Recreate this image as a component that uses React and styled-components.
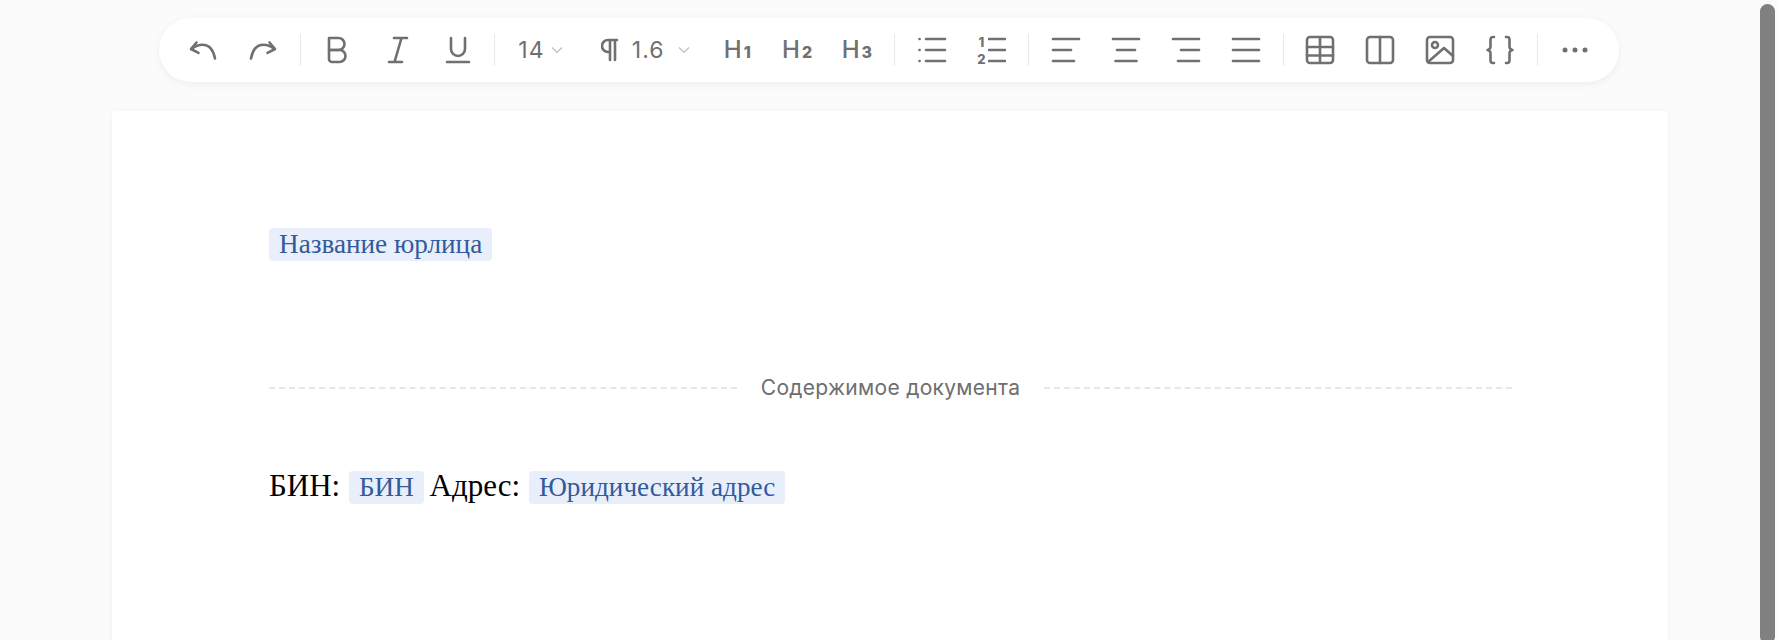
import React from "react";
import styled, { createGlobalStyle } from "styled-components";

const GlobalStyle = createGlobalStyle`
  html, body {
    margin: 0;
    padding: 0;
    background: #fbfbfb;
  }
`;

const Screen = styled.div`
  position: relative;
  width: 1778px;
  height: 640px;
  overflow: hidden;
  background: #fbfbfb;
  font-family: Inter, "Noto Sans", sans-serif;
`;

const ToolbarRow = styled.div`
  display: flex;
  justify-content: center;
  padding-top: 18px;
`;

const Toolbar = styled.div`
  display: flex;
  align-items: center;
  height: 64px;
  padding: 0 14px;
  background: #fff;
  border-radius: 32px;
  box-shadow: 0 2px 8px rgba(0, 0, 0, 0.06);
`;

const Btn = styled.div`
  display: flex;
  align-items: center;
  justify-content: center;
  width: 59.8px;
  height: 40px;
  color: #707070;
`;

const Divider = styled.div`
  width: 1px;
  height: 32px;
  margin: 0 7px;
  background: #e9e9e9;
`;

const Select = styled.div`
  box-sizing: border-box;
  display: flex;
  align-items: center;
  justify-content: center;
  gap: ${(p) => p.$gap}px;
  width: ${(p) => p.$width}px;
  height: 40px;
  padding-left: ${(p) => p.$shift || 0}px;
  color: #707070;
  font-size: 23px;
  letter-spacing: 1px;
`;

const Icon = styled.svg`
  width: 30px;
  height: 30px;
  fill: none;
  stroke: currentColor;
  stroke-width: 2.6;
  stroke-linecap: round;
  stroke-linejoin: round;
`;

const NarrowIcon = styled(Icon)`
  width: 18px;
`;

const Chevron = styled.svg`
  width: 12px;
  height: 8px;
  fill: none;
  stroke: #bdbdbd;
  stroke-width: 1.2;
`;

const Heading = styled.span`
  display: inline-flex;
  align-items: baseline;
  font-size: 24px;
  line-height: 1;
  font-weight: 500;
`;

const HeadingNum = styled.span`
  font-size: 16px;
  font-weight: 800;
  margin-left: 2px;
`;

const OlNums = styled.div`
  display: flex;
  flex-direction: column;
  gap: 5px;
  width: 10px;
  margin-right: 2px;
  font-size: 13px;
  font-weight: 800;
  line-height: 12px;
  text-align: center;
`;

const Card = styled.div`
  margin: 29px 110px 0 112px;
  height: 560px;
  padding: 114px 156px 0 157px;
  background: #fff;
  border-radius: 4px;
  box-shadow: 0 0 6px rgba(0, 0, 0, 0.04);
  font-family: "Liberation Serif", serif;
  font-size: 31px;
  color: #000;
`;

const Line = styled.div`
  line-height: 35px;
`;

const Field = styled.span`
  display: inline-block;
  margin: ${(p) => (p.$inline ? "0 -2px 0 1px" : "0")};
  padding: 0 10px;
  font-size: 27.2px;
  line-height: 33px;
  color: #335a9c;
  background: #e8effa;
  border-radius: 4px;
`;

const Separator = styled.div`
  display: flex;
  align-items: center;
  gap: 24px;
  margin: 114px 0 68px;
  font-family: Inter, "Noto Sans", sans-serif;
  font-size: 21px;
  letter-spacing: 0.3px;
  color: #6e6e6e;
`;

const Dash = styled.div`
  flex: 1;
  border-top: 2px dashed #e6e6e6;
`;

const ScrollThumb = styled.div`
  position: absolute;
  top: 4px;
  right: 3px;
  width: 15px;
  height: 640px;
  background: #808080;
  border-radius: 8px;
`;

const VB = "0 0 30 30";

const Glyph = ({ children }) => <Icon viewBox={VB}>{children}</Icon>;

const Caret = () => (
  <Chevron viewBox="0 0 12 8">
    <path d="M1 1.5l5 5 5-5" />
  </Chevron>
);

const Bars = ({ rows }) => (
  <Glyph>
    {rows.map(([a, b], i) => (
      <path key={i} d={`M${a} ${4 + i * 11}H${b}`} />
    ))}
  </Glyph>
);

export default function App() {
  return (
    <Screen>
      <GlobalStyle />
      <ToolbarRow>
        <Toolbar>
          <Btn>
            <Glyph>
              <path d="M8.5 7.5L3 14l7.5 3.8" />
              <path d="M3.5 14c3.6-2.8 7.4-4.2 11.2-4.2 6 0 10.6 5 12.3 13.7" />
            </Glyph>
          </Btn>
          <Btn>
            <Glyph>
              <path d="M21.5 7.5L27 14l-7.5 3.8" />
              <path d="M26.5 14c-3.6-2.8-7.4-4.2-11.2-4.2-6 0-10.6 5-12.3 13.7" />
            </Glyph>
          </Btn>
          <Divider />
          <Btn>
            <Glyph>
              <path d="M6 3h9.5a6 6 0 0 1 0 12H6z" />
              <path d="M6 15h10.5a6 6 0 0 1 0 12H9a3 3 0 0 1-3-3z" />
            </Glyph>
          </Btn>
          <Btn>
            <Glyph>
              <path d="M11 3h13M6 27h13M18.5 3l-7 24" />
            </Glyph>
          </Btn>
          <Btn>
            <Glyph>
              <path d="M8 3v11a7 7 0 0 0 14 0V3M4 27h22" />
            </Glyph>
          </Btn>
          <Divider />
          <Select $width={76} $gap={6}>
            14
            <Caret />
          </Select>
          <Select $width={129} $gap={13} $shift={4.6}>
            <NarrowIcon viewBox="6 0 18 30">
              <path d="M22 5H13a6 6 0 0 0 0 12h2M15 5v20M20 5v20" />
            </NarrowIcon>
            1.6
            <Caret />
          </Select>
          <Btn>
            <Heading>
              H<HeadingNum>1</HeadingNum>
            </Heading>
          </Btn>
          <Btn>
            <Heading>
              H<HeadingNum>2</HeadingNum>
            </Heading>
          </Btn>
          <Btn>
            <Heading>
              H<HeadingNum>3</HeadingNum>
            </Heading>
          </Btn>
          <Divider />
          <Btn>
            <Glyph>
              <path d="M9 4h19M9 15h19M9 26h19M2.5 4h.1M2.5 15h.1M2.5 26h.1" />
            </Glyph>
          </Btn>
          <Btn>
            <OlNums>
              <span>1</span>
              <span>2</span>
            </OlNums>
            <NarrowIcon viewBox="11 0 18 30">
              <path d="M12 4h16M12 15h16M12 26h16" />
            </NarrowIcon>
          </Btn>
          <Divider />
          <Btn>
            <Bars rows={[[2, 28], [2, 20], [2, 23]]} />
          </Btn>
          <Btn>
            <Bars rows={[[2, 28], [6, 24], [4.5, 25.5]]} />
          </Btn>
          <Btn>
            <Bars rows={[[2, 28], [10, 28], [7, 28]]} />
          </Btn>
          <Btn>
            <Bars rows={[[2, 28], [2, 28], [2, 28]]} />
          </Btn>
          <Divider />
          <Btn>
            <Glyph>
              <rect x="2" y="2" width="26" height="26" rx="3" />
              <path d="M15 2v26M2 12h26M2 20.5h26" />
            </Glyph>
          </Btn>
          <Btn>
            <Glyph>
              <rect x="2" y="2" width="26" height="26" rx="3" />
              <path d="M15 2v26" />
            </Glyph>
          </Btn>
          <Btn>
            <Glyph>
              <rect x="2" y="2" width="26" height="26" rx="3" />
              <circle cx="10" cy="10" r="3" />
              <path d="M3 27l16-14 9 8" />
            </Glyph>
          </Btn>
          <Btn>
            <Glyph>
              <path d="M9 2H8a2.5 2.5 0 0 0-2.5 2.5V11a3.5 3.5 0 0 1-3 4 3.5 3.5 0 0 1 3 4v6.5A2.5 2.5 0 0 0 8 28h1" />
              <path d="M21 2h1a2.5 2.5 0 0 1 2.5 2.5V11a3.5 3.5 0 0 0 3 4 3.5 3.5 0 0 0-3 4v6.5A2.5 2.5 0 0 1 22 28h-1" />
            </Glyph>
          </Btn>
          <Divider />
          <Btn>
            <Glyph>
              <circle cx="5" cy="15" r="2.5" fill="currentColor" stroke="none" />
              <circle cx="15" cy="15" r="2.5" fill="currentColor" stroke="none" />
              <circle cx="25" cy="15" r="2.5" fill="currentColor" stroke="none" />
            </Glyph>
          </Btn>
        </Toolbar>
      </ToolbarRow>
      <Card>
        <Line>
          <Field>Название юрлица</Field>
        </Line>
        <Separator>
          <Dash />
          Содержимое документа
          <Dash />
        </Separator>
        <Line>
          БИН: <Field $inline>БИН</Field> Адрес: <Field $inline>Юридический адрес</Field>
        </Line>
      </Card>
      <ScrollThumb />
    </Screen>
  );
}
